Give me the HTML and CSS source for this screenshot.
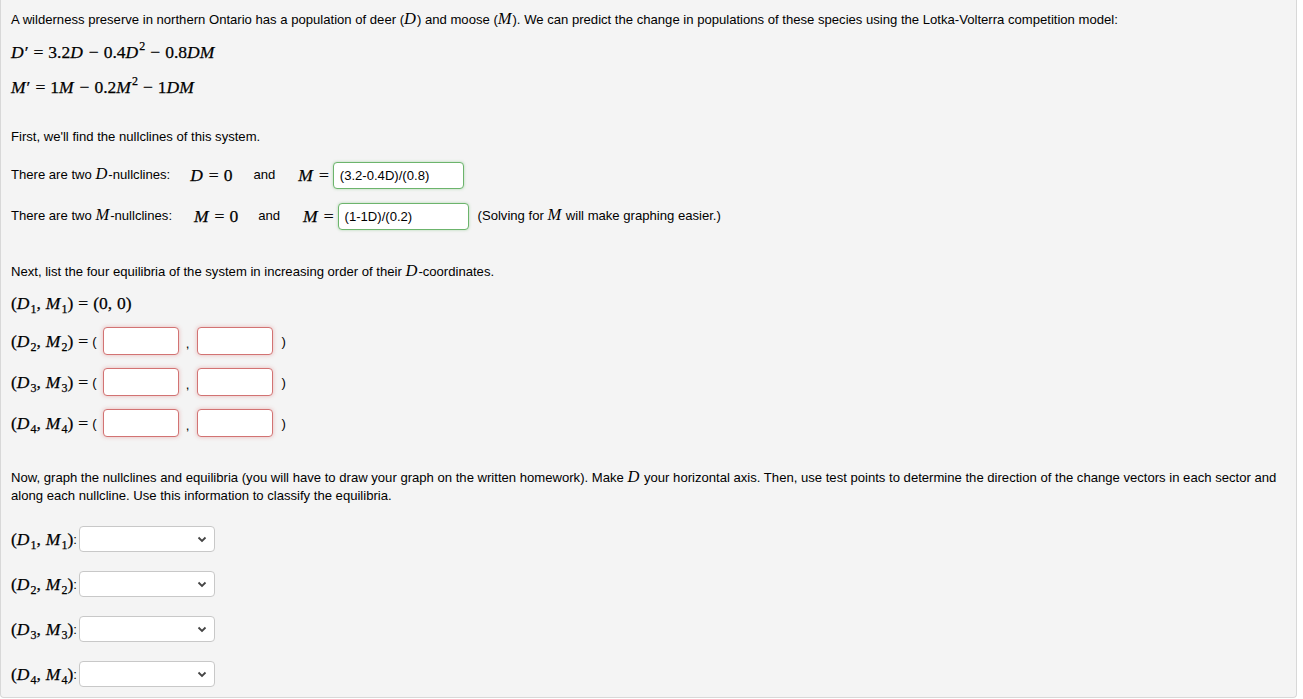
FILE: index.html
```html
<!DOCTYPE html>
<html>
<head>
<meta charset="utf-8">
<link rel="stylesheet" href="styles.css">
</head>
<body>
<div class="problem">
  <div class="txt">A wilderness preserve in northern Ontario has a population of deer (<span class="mi">D</span>) and moose (<span class="mi">M</span>). We can predict the change in populations of these species using the Lotka-Volterra competition model:</div>
  <div class="eq eq1"><span class="mi">D</span>′<span class="rel">=</span>3.2<span class="mi">D</span><span class="bin">−</span>0.4<span class="mi">D</span><sup>2</sup><span class="bin">−</span>0.8<span class="mi">DM</span></div>
  <div class="eq eq2"><span class="mi">M</span>′<span class="rel">=</span>1<span class="mi">M</span><span class="bin">−</span>0.2<span class="mi">M</span><sup>2</sup><span class="bin">−</span>1<span class="mi">DM</span></div>

  <div class="txt first">First, we'll find the nullclines of this system.</div>

  <div class="row nrow1">
    <span class="txt">There are two <span class="mi">D</span>-nullclines:</span>
    <span class="eqi g1"><span class="mi">D</span><span class="rel">=</span>0</span>
    <span class="txt and1">and</span>
    <span class="eqi g2"><span class="mi">M</span><span class="rel">=</span></span>
    <span class="ans good w131">(3.2-0.4D)/(0.8)</span>
  </div>
  <div class="row nrow2">
    <span class="txt">There are two <span class="mi">M</span>-nullclines:</span>
    <span class="eqi g1b"><span class="mi">M</span><span class="rel">=</span>0</span>
    <span class="txt and2">and</span>
    <span class="eqi g2"><span class="mi">M</span><span class="rel">=</span></span>
    <span class="ans good w131">(1-1D)/(0.2)</span>
    <span class="txt note">(Solving for <span class="mi">M</span> will make graphing easier.)</span>
  </div>

  <div class="txt next">Next, list the four equilibria of the system in increasing order of their <span class="mi">D</span>-coordinates.</div>
  <div class="eq eqp">(<span class="mi">D</span><sub>1</sub><span class="cm">,</span><span class="mi">M</span><sub>1</sub>)<span class="rel">=</span>(0<span class="cm">,</span>0)</div>
  <div class="row prow p2">
    <span class="eqi">(<span class="mi">D</span><sub>2</sub><span class="cm">,</span><span class="mi">M</span><sub>2</sub>)<span class="rel">=</span></span><span class="par">(</span>
    <span class="ans bad w76"></span><span class="comma">,</span><span class="ans bad w76"></span><span class="par rp">)</span>
  </div>
  <div class="row prow p3">
    <span class="eqi">(<span class="mi">D</span><sub>3</sub><span class="cm">,</span><span class="mi">M</span><sub>3</sub>)<span class="rel">=</span></span><span class="par">(</span>
    <span class="ans bad w76"></span><span class="comma">,</span><span class="ans bad w76"></span><span class="par rp">)</span>
  </div>
  <div class="row prow p3">
    <span class="eqi">(<span class="mi">D</span><sub>4</sub><span class="cm">,</span><span class="mi">M</span><sub>4</sub>)<span class="rel">=</span></span><span class="par">(</span>
    <span class="ans bad w76"></span><span class="comma">,</span><span class="ans bad w76"></span><span class="par rp">)</span>
  </div>

  <div class="txt now">Now, graph the nullclines and equilibria (you will have to draw your graph on the written homework). Make <span class="mi">D</span> your horizontal axis. Then, use test points to determine the direction of the change vectors in each sector and along each nullcline. Use this information to classify the equilibria.</div>

  <div class="row srow s1">
    <span class="eqi">(<span class="mi">D</span><sub>1</sub><span class="cm">,</span><span class="mi">M</span><sub>1</sub>)</span><span class="colon">:</span>
    <span class="sel"><svg class="chev" width="10" height="7" viewBox="0 0 10 7"><path d="M1.5 1.5 L5 5 L8.5 1.5" fill="none" stroke="#444" stroke-width="1.8"/></svg></span>
  </div>
  <div class="row srow s2">
    <span class="eqi">(<span class="mi">D</span><sub>2</sub><span class="cm">,</span><span class="mi">M</span><sub>2</sub>)</span><span class="colon">:</span>
    <span class="sel"><svg class="chev" width="10" height="7" viewBox="0 0 10 7"><path d="M1.5 1.5 L5 5 L8.5 1.5" fill="none" stroke="#444" stroke-width="1.8"/></svg></span>
  </div>
  <div class="row srow s2">
    <span class="eqi">(<span class="mi">D</span><sub>3</sub><span class="cm">,</span><span class="mi">M</span><sub>3</sub>)</span><span class="colon">:</span>
    <span class="sel"><svg class="chev" width="10" height="7" viewBox="0 0 10 7"><path d="M1.5 1.5 L5 5 L8.5 1.5" fill="none" stroke="#444" stroke-width="1.8"/></svg></span>
  </div>
  <div class="row srow s2">
    <span class="eqi">(<span class="mi">D</span><sub>4</sub><span class="cm">,</span><span class="mi">M</span><sub>4</sub>)</span><span class="colon">:</span>
    <span class="sel"><svg class="chev" width="10" height="7" viewBox="0 0 10 7"><path d="M1.5 1.5 L5 5 L8.5 1.5" fill="none" stroke="#444" stroke-width="1.8"/></svg></span>
  </div>
</div>
</body>
</html>
```
FILE: styles.css
```css
html, body {
  margin: 0;
  padding: 0;
  background: #fff;
}
.problem {
  box-sizing: border-box;
  width: 1297px;
  height: 698px;
  background: #f4f4f4;
  border: 1px solid #d8d8d8;
  border-top: none;
  border-radius: 0 0 4px 4px;
  padding: 11px 10px 0 10px;
  display: flex;
  flex-direction: column;
  align-items: flex-start;
  font-family: "Liberation Sans", Arial, sans-serif;
  font-size: 13.1px;
  color: #000;
}
.txt {
  font-family: "Liberation Sans", Arial, sans-serif;
  font-size: 13.1px;
  line-height: 18px;
}
.mi {
  font-family: "Liberation Serif", "Times New Roman", serif;
  font-style: italic;
}
.txt .mi { font-size: 16.5px; line-height: 0; padding-right: 1px; }
.eq, .eqi {
  font-family: "Liberation Serif", "Times New Roman", serif;
  font-size: 17.5px;
  line-height: 24px;
  white-space: nowrap;
  -webkit-text-stroke: 0.25px #000;
}
.eq .mi, .eqi .mi { padding-right: 1px; }
.eq { height: 24px; }
.eq sup { font-size: 12px; vertical-align: 8px; line-height: 0; }
.eq sub, .eqi sub { font-size: 12px; vertical-align: -4px; line-height: 0; }
.cm { margin-right: 5px; }
.rel { margin: 0 5px; }
.bin { margin: 0 5px; }
.eq1 { margin-top: 11px; }
.eq2 { margin-top: 11px; }
.first { margin-top: 29px; }
.row {
  display: flex;
  align-items: center;
  white-space: nowrap;
}
.nrow1 { margin-top: 15px; height: 28px; }
.nrow2 { margin-top: 13px; height: 28px; }
.g1 { margin-left: 20px; }
.g1b { margin-left: 22px; }
.and1 { margin-left: 21px; }
.and2 { margin-left: 20px; }
.g2 { margin-left: 23px; }
.g2 .rel { margin-right: 4px; }
.ans {
  box-sizing: border-box;
  display: inline-block;
  height: 27px;
  background: #fff;
  border-radius: 4px;
  font-family: "Liberation Sans", Arial, sans-serif;
  font-size: 13.1px;
  line-height: 25px;
  padding: 0 6px;
}
.w131 { width: 131px; }
.w76 { width: 76px; height: 28px; }
.good {
  border: 1px solid #6cb46c;
  box-shadow: 0 0 3px rgba(100, 180, 100, 0.45);
}
.bad {
  border: 1px solid #d27373;
  box-shadow: 0 0 4px rgba(220, 110, 110, 0.45);
}
.note { margin-left: 9px; }
.next { margin-top: 33px; }
.eqp { margin-top: 10px; }
.prow { height: 28px; }
.p2 { margin-top: 12px; }
.p3 { margin-top: 13px; }
.par {
  font-family: "Liberation Sans", Arial, sans-serif;
  font-size: 13.1px;
  margin: 0 6px 0 -1px;
}
.rp { margin: 0 0 0 9px; }
.comma {
  font-family: "Liberation Sans", Arial, sans-serif;
  font-size: 13.1px;
  width: 18px;
  text-align: center;
  padding-top: 4px;
}
.now { margin-top: 32px; width: 1275px; white-space: normal; }
.srow { height: 26px; }
.s1 { margin-top: 21px; }
.s2 { margin-top: 19px; }
.colon {
  font-family: "Liberation Sans", Arial, sans-serif;
  font-size: 13.1px;
  margin-right: 2px;
}
.sel {
  box-sizing: border-box;
  position: relative;
  display: inline-block;
  width: 136px;
  height: 26px;
  background: #fff;
  border: 1px solid #c8c8c8;
  border-radius: 4px;
}
.chev {
  position: absolute;
  right: 7px;
  top: 9px;
}
```
